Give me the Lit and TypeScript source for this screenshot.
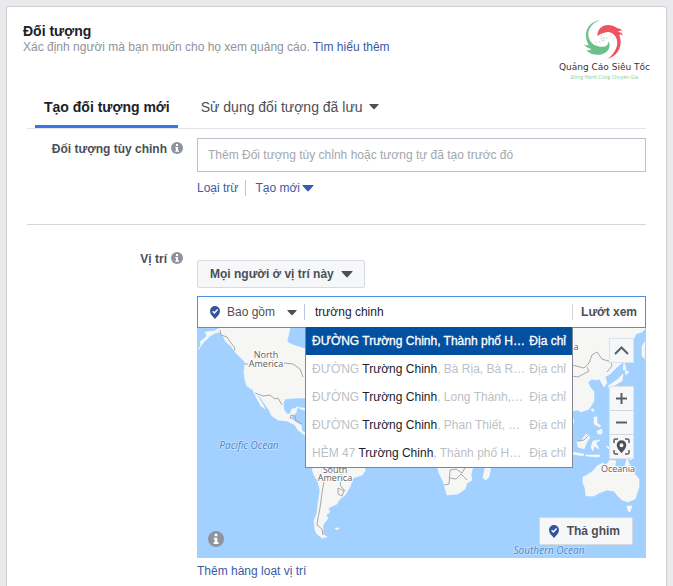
import { LitElement, html, css, svg } from "lit";
import { customElement, state } from "lit/decorators.js";

const caret = (cls = "") => html`
  <svg class="caret ${cls}" viewBox="0 0 12 8" aria-hidden="true">
    <path d="M1 1h10q1 0 .4.8L7 6.8q-1 1-2 0L.6 1.800Q0 1 1 1z" />
  </svg>
`;

const info = html`
  <svg class="info" viewBox="0 0 12 12" aria-hidden="true">
    <circle cx="6" cy="6" r="6" />
    <path d="M5 2h2v2H5zM4.300 5H7v3.500h1v1.300H4.200V8.500H5V6.200h-.7z" fill="#fff" />
  </svg>
`;

const pin = html`
  <svg class="pin" viewBox="0 0 10 13" aria-hidden="true">
    <path d="M5 0a5 5 0 0 1 5 5c0 3-2.600 5.500-5 8-2.400-2.500-5-5-5-8a5 5 0 0 1 5-5z" fill="#34539c" />
    <path d="M2.600 5.200l1.800 1.800 3.200-3.400" fill="none" stroke="#fff" stroke-width="1.500" />
  </svg>
`;

@customElement("brand-logo")
class BrandLogo extends LitElement {
  static styles = css`
    :host {
      display: flex;
      flex-direction: column;
      align-items: center;
      white-space: nowrap;
    }
    .mark {
      width: 40px;
      height: 42px;
    }
    .name {
      font: 9px/12px "DejaVu Sans", sans-serif;
      color: #3a3236;
    }
    .motto {
      font: 5px/8px "Open Sans", sans-serif;
      color: #7fd0a0;
    }
  `;
  render() {
    return html`
      <svg class="mark" viewBox="130 30 120 126" aria-hidden="true">
        <path
          d="M178 33C150 38 134 58 136 82C137 94 140 102 144 108C138 109 131 108 128 105C136 115 146 118 152 120C148 124 142 125 137 124C150 139 176 141 191 133C208 124 211 106 202 97C204 109 194 115 182 113C162 112 146 100 143 80C141 60 154 42 178 33Z"
          fill="#6cc08b"
        />
        <path
          d="M170 81C170 60 186 46 205 48C215 49 223 53 229 57C237 59 242 61 245 66C239 64 235 65 232 68C240 69 246 73 247 79C243 76 239 76 236 78C247 105 236 139 201 150C222 134 235 110 228 90C221 72 205 66 192 71C184 73 177 76 170 81Z"
          fill="#ee5360"
        />
        <g fill="none" stroke="#b9c3c6" stroke-width="2">
          <circle cx="187" cy="91" r="5" />
          <path d="M174 96l5 6M196 84l5 6M165 98l3 5M206 80l3 4M180 84l4-3" />
        </g>
      </svg>
      <span class="name">Quảng Cáo Siêu Tốc</span>
      <span class="motto">Đồng Hành Cùng Chuyên Gia</span>
    `;
  }
}

const land = [
  "M0 22L3 17L2 14L9 8L7 4L16 3L22 0L92 0L90 9L89 14L95 17L108 21L160 24L150 45L107 70L98 70L87 71L85 76L86 82L89 86L92 86L94 81L99 80L98 85L92 90L99 95L103 97L104 103L109 106L108 108L100 102L97 97L89 93L80 92L74 88L71 82L66 75L62 69L59 67L64 75L67 81L63 78L57 67L55 62L49 58L47 52L46 45L47 34L37 24L33 18L28 14L25 8L22 4L17 5L12 8L5 15Z",
  "M117 138L167 138L167 143L164 147L155 150L152 159L147 167L141 172L139 176L130 180L132 184L128 187L130 190L125 197L125 206L129 209L124 210L119 206L117 202L116 193L119 185L120 176L122 162L120 154L116 147L114 141Z",
  "M239 138L275 138L273 147L274 152L269 155L267 161L260 166L249 167L245 153L241 145Z",
  "M287 140L293 138L291 149L288 152L285 150Z",
  "M374 0L448 0L444 4L438 6L434 14L432 26L425 34L419 39L412 46L407 49L409 55L406 59L403 54L402 51L397 52L394 51L390 54L392 59L396 64L396 73L391 81L383 84L380 82L374 83Z",
  "M426 34L428 41L425 42ZM427 42L431 44L428 47ZM425 46L424 53L417 57L411 60L410 58L419 52Z",
  "M448 12L444 18L444 28L448 32Z",
  "M393 81L396 81L395 84ZM396 89L399 89L399 95L403 98L401 99L396 96ZM399 103L404 101L404 106L400 106Z",
  "M379 114L383 113L388 106L392 109L389 114L386 121L380 119ZM395 113L402 112L398 115L401 121L396 118L395 123L393 119ZM374 124L386 126L385 128L374 126ZM388 127L402 127L401 129L388 128Z",
  "M408 118L414 120L417 119L427 122L435 129L433 132L426 128L420 129L417 123L411 121Z",
  "M374 88L376 93L374 98Z",
  "M385 149L389 147L395 143L399 138L405 135L408 137L412 132L418 133L417 137L424 142L427 138L429 130L432 138L435 144L441 151L441 159L437 171L430 174L424 172L419 167L416 163L409 162L401 165L396 168L388 168L387 160L385 155Z",
  "M429 178L434 178L432 184L430 183Z",
  "M137 200L141 200L139 202ZM98 79L110 81L106 82Z",
];

const borders = [
  "M22 2L23 7L29 9L33 15L37 20L36 23M57 65L65 68L72 67L77 71L80 70L84 77M46 36L50 36M86 35L95 36L102 41L105 49",
  "M92 91L93 87L97 88L98 93M97 92L104 96",
  "M126 153L124 165L122 180L120 190L119 197L124 201L125 207M144 149L142 157L147 163M140 160L146 163L144 168L140 166Z",
  "M246 157L251 156L252 142L258 141L264 145L267 140M252 150L258 151L263 146L269 152",
  "M374 37L386 40L391 35L394 27L399 24L404 31L413 34L414 38L409 44M374 48L380 49L391 43L389 39",
  "M380 113L386 112L390 108",
];

@customElement("world-map")
class WorldMap extends LitElement {
  static styles = css`
    :host {
      display: block;
    }
    .map {
      display: block;
      width: 100%;
      height: 100%;
      background: #a3d1ff;
    }
    .land {
      fill: #f6f6f5;
      stroke: #fff;
      stroke-width: 0.5;
    }
    .border {
      fill: none;
      stroke: #aaa7ab;
      stroke-width: 1;
    }
    .place,
    .ocean {
      font: 10px "Open Sans", sans-serif;
      text-anchor: middle;
      fill: #5c5c5c;
      paint-order: stroke;
      stroke: #fff;
      stroke-width: 1.5;
    }
    .place {
      font-size: 9px;
    }
    .ocean {
      font-style: italic;
      fill: #4d86c6;
      stroke: #c4e1ff;
    }
  `;
  render() {
    return html`
      <svg class="map" viewBox="0 0 447 229" preserveAspectRatio="xMidYMid slice" role="img" aria-label="Bản đồ">
        ${land.map((d) => svg`<path class="land" d=${d} />`)}
        ${borders.map((d) => svg`<path class="border" d=${d} />`)}
        <text class="place" x="68" y="30">North</text>
        <text class="place" x="68" y="39">America</text>
        <text class="place" x="137" y="145">South</text>
        <text class="place" x="137" y="153">America</text>
        <text class="place" x="420" y="144">Oceania</text>
        <text class="place" x="378" y="22">a</text>
        <text class="ocean" x="51" y="121">Pacific Ocean</text>
        <text class="ocean" x="351" y="226">Southern Ocean</text>
      </svg>
    `;
  }
}

interface Place {
  street: string;
  name: string;
  area: string;
}

const places: Place[] = [
  { street: "ĐƯỜNG", name: "Trường Chinh", area: "Thành phố H…" },
  { street: "ĐƯỜNG", name: "Trường Chinh", area: "Bà Rịa, Bà R…" },
  { street: "ĐƯỜNG", name: "Trường Chinh", area: "Long Thành,…" },
  { street: "ĐƯỜNG", name: "Trường Chinh", area: "Phan Thiết, …" },
  { street: "HẺM 47", name: "Trường Chinh", area: "Thành phố H…" },
];

@customElement("app-root")
class AppRoot extends LitElement {
  @state() private active = 0;

  static styles = css`
    :host {
      display: block;
      box-sizing: border-box;
      min-height: 100vh;
      padding: 6px 6px 0;
      background: #e9eaeb;
      font: 12px/16px "Liberation Sans", Arial, sans-serif;
      color: #1d2129;
    }
    * {
      box-sizing: border-box;
    }
    button,
    input,
    select {
      font: inherit;
      color: inherit;
      margin: 0;
      border: 0;
      background: none;
    }
    a {
      color: #3b5ba5;
      text-decoration: none;
    }
    svg {
      flex: none;
    }
    .card {
      min-height: calc(100vh - 6px);
      padding: 12px 20px 0;
      background: #fff;
      border: 1px solid #cfd0d3;
      border-bottom: 0;
      border-radius: 3px 3px 0 0;
    }
    .head {
      display: flex;
      justify-content: space-between;
      height: 71px;
      margin: 0 -4px;
    }
    .title {
      margin: 4px 0 0;
      font-size: 14px;
      line-height: 16px;
    }
    .lead {
      margin: 0;
      color: #90949c;
    }
    .tabs {
      display: flex;
      gap: 14px;
      padding-left: 8px;
      border-bottom: 1px solid #e3e4e8;
    }
    .tab {
      display: flex;
      align-items: center;
      gap: 6px;
      height: 38px;
      padding: 0 8px 2px 9px;
      border-bottom: 3px solid transparent;
      font-size: 14px;
      color: #4b4f56;
    }
    .tab.on {
      border-color: #3578e5;
      font-weight: bold;
      color: #1d2129;
    }
    .caret {
      width: 12px;
      height: 8px;
      fill: #4b4f56;
    }
    .caret.small {
      width: 10px;
      height: 7px;
    }
    .caret.blue {
      fill: #365fb0;
    }
    .row {
      display: grid;
      grid-template-columns: 156px minmax(0, 1fr);
      gap: 14px;
    }
    .row.custom {
      padding: 9px 0 28px;
      border-bottom: 1px solid #d3d6db;
    }
    .row.place {
      padding-top: 26px;
    }
    .label {
      display: flex;
      justify-content: flex-end;
      gap: 4px;
      padding-top: 3px;
      font-weight: bold;
      color: #4b4f56;
    }
    .row.place .label {
      padding-top: 0;
    }
    .info {
      width: 12px;
      height: 12px;
      fill: #8d949e;
    }
    .label .info {
      margin-top: 1px;
    }
    .audience {
      display: block;
      width: 100%;
      height: 34px;
      padding: 0 10px;
      border: 1px solid #bdc1c9;
    }
    .audience::placeholder {
      color: #a3a7ae;
      opacity: 1;
    }
    .links {
      display: flex;
      gap: 7px;
      padding-top: 8px;
    }
    .create {
      display: flex;
      align-items: center;
      gap: 2px;
      height: 16px;
      padding: 0 0 0 9px;
      border-left: 1px solid #bdc6dc;
      color: #3b5ba5;
    }
    .pick {
      display: inline-grid;
      position: relative;
      align-items: center;
    }
    .pick select {
      appearance: none;
      outline: none;
    }
    .pick .caret {
      position: absolute;
      right: 12px;
      pointer-events: none;
    }
    .pick .pin {
      position: absolute;
      left: 12px;
      pointer-events: none;
    }
    .who {
      margin: 9px 0 8px;
    }
    .who select {
      height: 28px;
      padding: 0 30px 0 12px;
      border: 1px solid #d8dade;
      border-radius: 2px;
      background: #f6f7f9;
      font-weight: bold;
      color: #4b4f56;
    }
    .search {
      display: flex;
      align-items: center;
      height: 32px;
      border: 1px solid #4a8fe2;
    }
    .mode select {
      height: 16px;
      padding: 0 28px 0 29px;
      border-right: 1px solid #bdc6dc;
      color: #4b4f56;
    }
    .mode .caret {
      right: 8px;
    }
    .pin {
      width: 10px;
      height: 13px;
    }
    .query {
      flex: 1;
      min-width: 0;
      height: 30px;
      padding: 0 10px;
      outline: none;
    }
    .browse {
      height: 16px;
      padding: 0 8px;
      border-left: 1px solid #d3d6db;
      font-weight: bold;
      color: #4b4f56;
    }
    .stage {
      position: relative;
      height: 230px;
      border: solid #c4cbd4;
      border-width: 0 1px 1px;
    }
    world-map {
      height: 100%;
    }
    .results {
      position: absolute;
      left: 107px;
      top: -1px;
      width: 268px;
      margin: 0;
      padding: 0;
      list-style: none;
      background: #fff;
      border: 1px solid #7f8591;
      border-top: 0;
    }
    .option {
      display: flex;
      justify-content: space-between;
      padding: 6px;
      white-space: nowrap;
      color: #bcbfc5;
      cursor: pointer;
    }
    .option b {
      font-weight: normal;
      color: #1d2129;
    }
    .option.on {
      background: #0350a0;
      color: #fff;
      -webkit-text-stroke: 0.3px #fff;
    }
    .option.on b {
      color: #fff;
    }
    .tools {
      position: absolute;
      right: 12px;
      top: 11px;
      display: grid;
      gap: 25px;
    }
    .group {
      display: grid;
      gap: 1px;
      background: #d3d6db;
      outline: 1px solid #dfe3e9;
    }
    .tool {
      display: grid;
      place-items: center;
      width: 23px;
      height: 23px;
      padding: 0;
      background: #f6f7f9;
    }
    .tool svg {
      width: 17px;
      height: 17px;
      fill: none;
      stroke: #5a5e66;
      stroke-width: 2;
    }
    .about {
      position: absolute;
      left: 10px;
      bottom: 10px;
      padding: 0;
      height: 16px;
    }
    .about .info {
      width: 16px;
      height: 16px;
    }
    .drop {
      position: absolute;
      right: 12px;
      bottom: 12px;
      display: flex;
      align-items: center;
      gap: 8px;
      height: 28px;
      padding: 0 12px 0 9px;
      border: 1px solid #d8dade;
      border-radius: 2px;
      background: #f6f7f9;
      font-weight: bold;
      color: #4b4f56;
    }
    .more {
      display: block;
      padding: 5px 0;
    }
  `;

  render() {
    return html`
      <main class="card">
        <header class="head">
          <div>
            <h1 class="title">Đối tượng</h1>
            <p class="lead">Xác định người mà bạn muốn cho họ xem quảng cáo. <a href="#help">Tìm hiểu thêm</a></p>
          </div>
          <brand-logo></brand-logo>
        </header>

        <div class="tabs" role="tablist">
          <button class="tab on" role="tab" aria-selected="true">Tạo đối tượng mới</button>
          <button class="tab" role="tab" aria-selected="false">Sử dụng đối tượng đã lưu ${caret("small")}</button>
        </div>

        <section class="row custom">
          <label class="label" for="audience">Đối tượng tùy chỉnh ${info}</label>
          <div>
            <input
              class="audience"
              id="audience"
              placeholder="Thêm Đối tượng tùy chỉnh hoặc tương tự đã tạo trước đó"
            />
            <div class="links">
              <a href="#exclude">Loại trừ</a>
              <button class="create">Tạo mới ${caret("blue")}</button>
            </div>
          </div>
        </section>

        <section class="row place">
          <label class="label" for="query">Vị trí ${info}</label>
          <div>
            <div class="pick who">
              <select aria-label="Vị trí">
                <option>Mọi người ở vị trí này</option>
              </select>
              ${caret()}
            </div>
            <div class="search">
              <div class="pick mode">
                ${pin}
                <select aria-label="Bao gồm">
                  <option>Bao gồm</option>
                </select>
                ${caret("small")}
              </div>
              <input class="query" id="query" .value=${"trường chinh"} spellcheck="false" />
              <button class="browse">Lướt xem</button>
            </div>
            <div class="stage">
              <world-map></world-map>
              <div class="tools">
                <div class="group">
                  <button class="tool" aria-label="Thu gọn">
                    <svg viewBox="0 0 17 17"><path d="M2 12l6.500-6.500 6.500 6.500" /></svg>
                  </button>
                </div>
                <div class="group">
                  <button class="tool" aria-label="Phóng to">
                    <svg viewBox="0 0 17 17"><path d="M3 8.500h11M8.500 3v11" /></svg>
                  </button>
                  <button class="tool" aria-label="Thu nhỏ">
                    <svg viewBox="0 0 17 17"><path d="M3 8.500h11" /></svg>
                  </button>
                  <button class="tool" aria-label="Vị trí của tôi">
                    <svg viewBox="0 0 17 17">
                      <path d="M1 5V2.500Q1 1 2.500 1H5M12 1h2.500Q16 1 16 2.500V5M16 12v2.500q0 1.500-1.500 1.500H12M5 16H2.500Q1 16 1 14.500V12" stroke-width="1.500" />
                      <path
                        d="M8.500 2.300a4.800 4.800 0 0 1 4.800 4.800C13.300 10 11 12.500 8.500 15.200 6 12.500 3.700 10 3.700 7.100A4.800 4.800 0 0 1 8.500 2.300zm0 2.900a2 2 0 1 0 0 4A2 2 0 0 0 8.500 5.200z"
                        fill="#4b4f56"
                        stroke="none"
                      />
                    </svg>
                  </button>
                </div>
              </div>
              <button class="about" aria-label="Thông tin">${info}</button>
              <button class="drop">${pin} Thả ghim</button>
              <ul class="results" role="listbox" aria-label="Địa chỉ">
                ${places.map(
                  (p, i) => html`
                    <li
                      class="option ${i === this.active ? "on" : ""}"
                      role="option"
                      aria-selected=${i === this.active}
                      @mouseenter=${() => (this.active = i)}
                    >
                      <span>${p.street} <b>${p.name}</b>, ${p.area}</span>
                      <span>Địa chỉ</span>
                    </li>
                  `
                )}
              </ul>
            </div>
            <a class="more" href="#bulk">Thêm hàng loạt vị trí</a>
          </div>
        </section>
      </main>
    `;
  }
}
